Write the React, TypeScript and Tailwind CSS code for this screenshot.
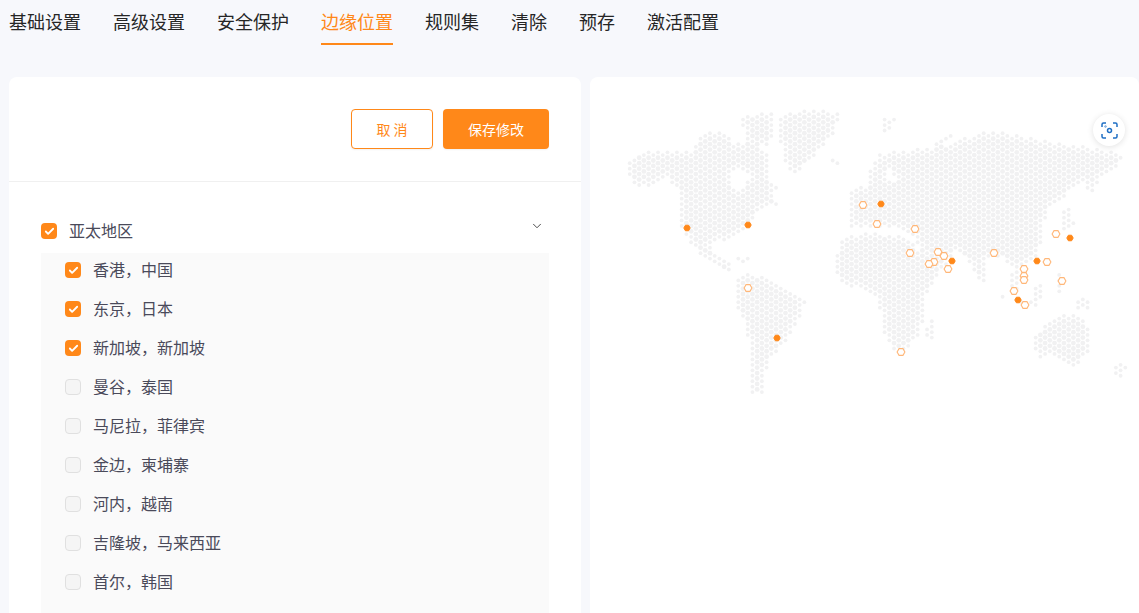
import React from 'react';
import { Check, ChevronDown } from 'lucide-react';

const tabs = ['基础设置', '高级设置', '安全保护', '边缘位置', '规则集', '清除', '预存', '激活配置'];

const locations = [
  { name: '香港\uFF0C中国', checked: true },
  { name: '东京\uFF0C日本', checked: true },
  { name: '新加坡\uFF0C新加坡', checked: true },
  { name: '曼谷\uFF0C泰国', checked: false },
  { name: '马尼拉\uFF0C菲律宾', checked: false },
  { name: '金边\uFF0C柬埔寨', checked: false },
  { name: '河内\uFF0C越南', checked: false },
  { name: '吉隆坡\uFF0C马来西亚', checked: false },
  { name: '首尔\uFF0C韩国', checked: false },
];

type Pt = [number, number];

// rough land outlines, in page pixels
const land: Pt[][] = [
  // north america
  [[630,160],[640,152],[693,152],[693,143],[753,143],[767,153],[767,177],[777,187],[773,197],[780,205],[760,209],[748,228],[733,238],[708,243],[720,257],[730,262],[733,275],[726,274],[717,265],[700,254],[687,238],[678,220],[678,190],[667,178],[653,184],[640,188],[628,178]],
  [[730,256],[752,256],[752,262],[735,262]],
  [[695,138],[708,132],[725,132],[732,143],[700,146]],
  [[742,118],[760,112],[772,114],[774,130],[770,146],[750,146],[744,135]],
  // greenland
  [[777,117],[800,110],[825,109],[842,116],[832,135],[816,155],[800,170],[795,176],[786,165],[780,140]],
  [[830,161],[840,158],[844,164],[836,167]],
  [[880,120],[898,116],[892,128],[884,136]],
  [[933,146],[948,133],[951,136],[940,148]],
  [[1043,130],[1050,132],[1046,138]],
  // eurasia
  [[850,216],[850,190],[866,186],[870,172],[878,155],[895,152],[930,148],[955,142],[975,135],[992,130],[1005,133],[1030,138],[1060,143],[1090,148],[1110,151],[1122,158],[1118,168],[1100,176],[1095,190],[1086,192],[1082,180],[1072,186],[1066,198],[1050,208],[1044,222],[1044,238],[1036,256],[1028,268],[1024,262],[1016,272],[1006,260],[992,254],[986,262],[985,285],[976,280],[970,262],[955,252],[950,258],[945,270],[930,272],[925,255],[912,235],[893,228],[872,228],[850,228]],
  // africa
  [[834,258],[843,238],[870,233],[893,235],[912,240],[925,258],[940,270],[938,278],[930,290],[924,298],[926,315],[918,335],[908,350],[892,352],[885,335],[880,310],[876,295],[860,288],[845,288],[836,275]],
  [[929,318],[936,315],[936,328],[930,342],[925,338]],
  // south america
  [[737,277],[748,272],[766,278],[785,290],[805,300],[802,315],[790,335],[782,345],[768,362],[764,380],[764,398],[752,392],[750,370],[750,345],[745,325],[737,310],[734,295]],
  // islands
  [[1032,287],[1042,285],[1044,298],[1034,300]],
  [[1010,272],[1018,272],[1022,290],[1012,288]],
  [[1000,296],[1026,300],[1050,308],[1026,306]],
  [[1057,270],[1063,270],[1064,293],[1057,293]],
  [[1060,210],[1072,208],[1074,228],[1062,232]],
  [[1072,296],[1086,298],[1092,308],[1078,308]],
  // australia
  [[1034,335],[1050,322],[1062,316],[1075,312],[1085,318],[1092,335],[1088,352],[1080,362],[1075,372],[1066,362],[1048,355],[1036,358]],
  [[1110,372],[1122,360],[1126,368],[1118,380]],
];

const lakes: Pt[][] = [
  [[732,172],[742,168],[750,176],[746,186],[736,190],[730,182]],
  [[887,168],[893,170],[895,180],[889,180]],
];

const inside = (x: number, y: number, poly: Pt[]) => {
  let hit = false;
  for (let i = 0, j = poly.length - 1; i < poly.length; j = i++) {
    const [xi, yi] = poly[i];
    const [xj, yj] = poly[j];
    if (yi > y !== yj > y && x < ((xj - xi) * (y - yi)) / (yj - yi) + xi) hit = !hit;
  }
  return hit;
};

const onLand = (x: number, y: number) => land.some((p) => inside(x, y, p)) && !lakes.some((p) => inside(x, y, p));

const dots: { x: number; y: number; r: number }[] = [];
for (let col = 0; col < 110; col++) {
  const x = 625 + col * 4.72;
  for (let row = 0; row < 56; row++) {
    const y = 106 + row * 5.45 + (col % 2 ? 2.72 : 0);
    if (!onLand(x, y)) continue;
    // dots on the coast are drawn smaller
    const coast = !onLand(x + 5, y) || !onLand(x - 5, y) || !onLand(x, y + 5) || !onLand(x, y - 5);
    dots.push({ x, y, r: coast ? 1.9 : 2.4 });
  }
}

const solid: Pt[] = [[687,228],[748,225],[881,204],[777,338],[952,261],[1037,261],[1070,238],[1018,300]];
const hollow: Pt[] = [[863,205],[877,224],[915,229],[748,288],[910,253],[938,252],[944,256],[934,262],[929,264],[948,269],[994,253],[1056,234],[1047,262],[1024,269],[1024,276],[1024,280],[1062,281],[1014,291],[1025,305],[901,352]];

const hex = ([x, y]: Pt, r: number) =>
  [0, 60, 120, 180, 240, 300]
    .map((a) => `${x + r * Math.cos((a * Math.PI) / 180)},${y + r * Math.sin((a * Math.PI) / 180)}`)
    .join(' ');

const Box = ({ checked }: { checked: boolean }) =>
  checked ? (
    <span className="flex h-4 w-4 items-center justify-center rounded-sm bg-[#ff8819]">
      <Check size={11} strokeWidth={4} className="text-white" />
    </span>
  ) : (
    <span className="h-4 w-4 rounded-sm border border-[#e0e0e0] bg-[#f5f5f5]" />
  );

export default function App() {
  return (
    <div className="flex h-[613px] flex-col overflow-hidden bg-[#f7f8fc] font-['Noto_Sans_CJK_SC',sans-serif]">
      <div className="flex h-[77px] shrink-0 items-start gap-8 pl-[9px]">
        {tabs.map((t) => (
          <div
            key={t}
            className={
              t === '边缘位置'
                ? 'h-[45px] border-b-2 border-[#ff8819] pt-2 text-[18px] leading-[26px] text-[#ff8819]'
                : 'h-[45px] pt-2 text-[18px] leading-[26px] text-[#262626]'
            }
          >
            {t}
          </div>
        ))}
      </div>

      <div className="flex flex-1 gap-[9px] pl-[9px]">
        <div className="h-[536px] w-[572px] overflow-hidden rounded-t-lg bg-white">
          <div className="flex h-[105px] items-start justify-end gap-[10px] border-b border-[#f0f0f0] pt-8 pr-8">
            <button className="h-10 w-[82px] rounded border border-[#ff8819] bg-white text-[14px] text-[#ff8819] shadow-[0_1px_2px_rgba(0,0,0,0.06)]">
              取 消
            </button>
            <button className="h-10 w-[106px] rounded bg-[#ff8819] text-[14px] text-white shadow-[0_1px_2px_rgba(0,0,0,0.06)]">
              保存修改
            </button>
          </div>
          <div className="px-8">
            <div className="flex h-[71px] items-start pt-[41px]">
              <Box checked />
              <span className="-mt-px ml-3 text-[16px] leading-4 text-[#4a4a5a]">亚太地区</span>
              <ChevronDown size={14} strokeWidth={1.5} className="mt-[-4px] mr-[5px] ml-auto text-[#333]" />
            </div>
            <div className="bg-[#fafafa] px-6 pb-10">
              {locations.map((l) => (
                <div key={l.name} className="flex h-[39px] items-center pb-[5px]">
                  <Box checked={l.checked} />
                  <span className="mb-[2px] ml-3 text-[16px] leading-6 text-[#4a4a5a]">{l.name}</span>
                </div>
              ))}
            </div>
          </div>
        </div>

        <div className="relative h-[536px] flex-1 rounded-t-lg bg-white">
          <svg viewBox="590 77 549 536" className="block h-[536px] w-[549px]">
            {dots.map((d) => (
              <circle key={`${d.x}-${d.y}`} cx={d.x} cy={d.y} r={d.r} fill="#f1f1f2" />
            ))}
            {hollow.map((p) => (
              <polygon key={p.join()} points={hex(p, 3.9)} fill="#fff" stroke="#ffb779" strokeWidth={1.1} />
            ))}
            {solid.map((p) => (
              <polygon key={p.join()} points={hex(p, 3.2)} fill="#ff8819" stroke="#ff8819" strokeWidth={1} strokeLinejoin="round" />
            ))}
          </svg>
          <button className="absolute top-[37px] right-[14px] flex h-8 w-8 items-center justify-center rounded-full bg-white shadow-[0_1px_6px_rgba(0,0,0,0.12)]">
            <svg width="17" height="17" viewBox="0 0 17 17" fill="none" stroke="#1f6fc4" strokeWidth="1.5">
              <path d="M1 5V2.5A1.5 1.5 0 0 1 2.5 1H5M12 1h2.5A1.5 1.5 0 0 1 16 2.5V5M16 12v2.5a1.5 1.5 0 0 1-1.5 1.5H12M5 16H2.5A1.5 1.5 0 0 1 1 14.5V12" />
              <circle cx="8.5" cy="8.5" r="2" />
              <circle cx="4.5" cy="4.5" r="0.3" />
            </svg>
          </button>
        </div>
      </div>
    </div>
  );
}
